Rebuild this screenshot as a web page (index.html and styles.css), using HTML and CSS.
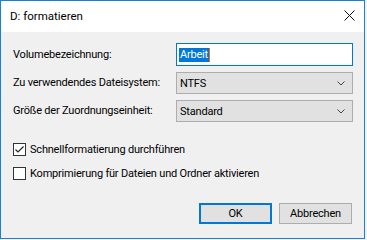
FILE: index.html
```html
<!DOCTYPE html>
<html lang="de">
<head>
<meta charset="utf-8">
<title>D: formatieren</title>
<link rel="stylesheet" href="styles.css">
</head>
<body>
<div class="window">
  <div class="titlebar">
    <span class="title">D: formatieren</span>
    <svg class="close" width="11" height="11" viewBox="0 0 11 11"><path d="M0.5 0.5 L10.5 10.5 M10.5 0.5 L0.5 10.5" stroke="#111" stroke-width="1" fill="none"/></svg>
  </div>
  <div class="content">
    <div class="form">
      <div class="label">Volumebezeichnung:</div>
      <div class="input"><span class="sel">Arbeit</span><span class="caret"></span></div>
      <div class="label">Zu verwendendes Dateisystem:</div>
      <div class="select"><span>NTFS</span><svg class="chev" width="8" height="5" viewBox="0 0 8 5"><path d="M0.5 0.5 L4 4 L7.5 0.5" stroke="#444" stroke-width="1" fill="none"/></svg></div>
      <div class="label">Größe der Zuordnungseinheit:</div>
      <div class="select"><span>Standard</span><svg class="chev" width="8" height="5" viewBox="0 0 8 5"><path d="M0.5 0.5 L4 4 L7.5 0.5" stroke="#444" stroke-width="1" fill="none"/></svg></div>
    </div>
    <div class="checks">
      <div class="check"><span class="box"><svg width="11" height="11" viewBox="0 0 11 11"><path d="M1.5 5.5 L4 8 L9.5 2.5" stroke="#222" stroke-width="1.2" fill="none"/></svg></span><span>Schnellformatierung durchführen</span></div>
      <div class="check"><span class="box"></span><span>Komprimierung für Dateien und Ordner aktivieren</span></div>
    </div>
    <div class="buttons">
      <div class="btn default">OK</div>
      <div class="btn">Abbrechen</div>
    </div>
  </div>
</div>
</body>
</html>
```
FILE: styles.css
```css
* {
  box-sizing: border-box;
}
html, body {
  margin: 0;
  padding: 0;
  background: #f3f3f3;
}
body {
  font-family: Roboto, "Liberation Sans", sans-serif;
  font-size: 11px;
  letter-spacing: -0.2px;
  color: #000;
}
.window {
  width: 365px;
  height: 239px;
  border: 1px solid #1a7fd6;
  background: #f0f0f0;
  display: flex;
  flex-direction: column;
}
.titlebar {
  height: 31px;
  flex: none;
  background: #fff;
  display: flex;
  align-items: center;
  justify-content: space-between;
  padding: 0 9px 0 9px;
}
.title {
  font-size: 11.5px;
  letter-spacing: 0;
  margin-top: -1px;
}
.close {
  display: block;
  margin-top: -2px;
}
.content {
  flex: 1;
  padding: 11px 11px 0 12px;
  display: flex;
  flex-direction: column;
}
.form {
  display: grid;
  grid-template-columns: 163px 177px;
  grid-template-rows: 23px 22px 22px;
  row-gap: 6px;
  align-items: center;
}
.label {
  white-space: nowrap;
  line-height: 16px;
}
.input {
  height: 23px;
  border: 1px solid #0078d7;
  background: #fff;
  display: flex;
  align-items: center;
  padding-left: 2px;
}
.sel {
  background: #0078d7;
  color: #fff;
  line-height: 14px;
  padding: 0 1px;
}
.caret {
  width: 1px;
  height: 14px;
  background: #e07010;
}
.select {
  height: 22px;
  border: 1px solid #adadad;
  background: #e1e1e1;
  display: flex;
  align-items: center;
  justify-content: space-between;
  padding: 0 7px 0 3px;
}
.chev {
  display: block;
}
.checks {
  margin-top: 21px;
  display: flex;
  flex-direction: column;
  gap: 11px;
}
.check {
  display: flex;
  align-items: center;
  gap: 4px;
  height: 13px;
  white-space: nowrap;
}
.box {
  width: 13px;
  height: 13px;
  border: 1px solid #333;
  background: #fff;
  display: flex;
  flex: none;
}
.box svg {
  display: block;
}
.buttons {
  margin-top: 23px;
  display: flex;
  justify-content: flex-end;
  gap: 7px;
  padding-right: 1px;
}
.btn {
  width: 73px;
  height: 21px;
  border: 1px solid #adadad;
  background: #e1e1e1;
  display: flex;
  align-items: center;
  justify-content: center;
}
.btn.default {
  border: 2px solid #0078d7;
}
```
